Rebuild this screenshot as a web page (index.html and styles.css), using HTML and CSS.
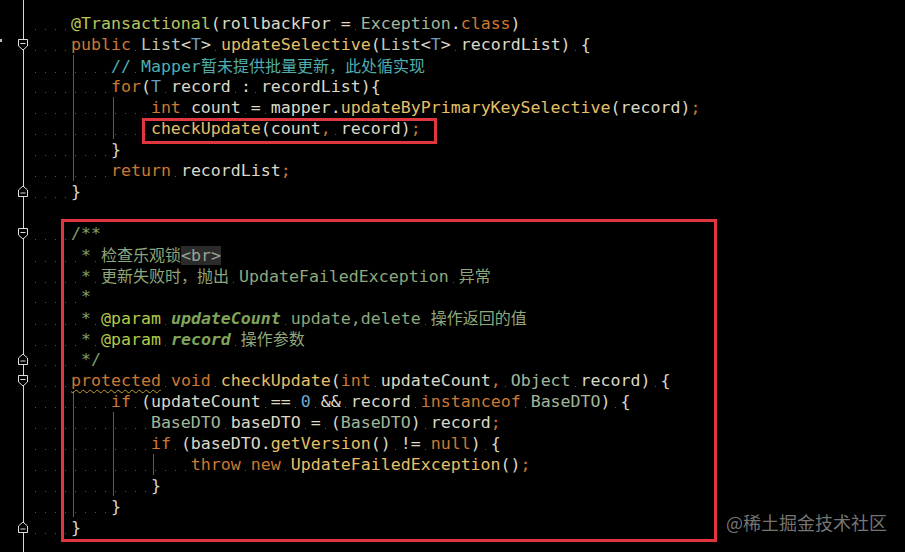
FILE: index.html
```html
<!DOCTYPE html>
<html lang="zh">
<head>
<meta charset="utf-8">
<title>checkUpdate</title>
<link rel="stylesheet" href="styles.css">
</head>
<body>
<div class="editor">
  <span class="tick"></span>
  <div class="code">
    <div class="ln"><span class="gut"></span><span class="src"><span class="w">    </span><span class="an">@Transactional</span>(rollbackFor<span class="w"> </span>=<span class="w"> </span><span class="cl">Exception</span>.<span class="k">class</span>)</span></div>
    <div class="ln"><span class="gut"><svg class="fold" viewBox="0 0 12 13"><path d="M1.5 1.5H10.5V8L6 12L1.5 8Z"/><path d="M3.5 5.5H8.5"/></svg></span><span class="src"><span class="w">    </span><span class="k">public</span><span class="w"> </span><span class="li">List</span>&lt;<span class="tp">T</span>&gt;<span class="w"> </span><span class="fn">updateSelective</span>(<span class="li">List</span>&lt;<span class="tp">T</span>&gt;<span class="w"> </span>recordList)<span class="w"> </span>{</span></div>
    <div class="ln g1"><span class="gut"></span><span class="src"><span class="w">        </span><span class="cm">//<span class="w"> </span>Mapper<span class="zh">暂未提供批量更新，此处循实现</span></span></span></div>
    <div class="ln g1"><span class="gut"></span><span class="src"><span class="w">        </span><span class="k">for</span>(<span class="tp">T</span><span class="w"> </span>record<span class="w"> </span>:<span class="w"> </span>recordList){</span></div>
    <div class="ln g2"><span class="gut"></span><span class="src"><span class="w">            </span><span class="k">int</span><span class="w"> </span>count<span class="w"> </span>=<span class="w"> </span>mapper.<span class="fn">updateByPrimaryKeySelective</span>(record)<span class="k">;</span></span></div>
    <div class="ln g2"><span class="gut"></span><span class="src"><span class="w">            </span><span class="fn">checkUpdate</span>(count<span class="k">,</span><span class="w"> </span>record)<span class="k">;</span></span></div>
    <div class="ln g1"><span class="gut"></span><span class="src"><span class="w">        </span>}</span></div>
    <div class="ln g1"><span class="gut"></span><span class="src"><span class="w">        </span><span class="k">return</span><span class="w"> </span>recordList<span class="k">;</span></span></div>
    <div class="ln"><span class="gut"><svg class="fold" viewBox="0 0 12 13"><path d="M1.5 11.5H10.5V5L6 1L1.5 5Z"/><path d="M3.5 8H8.5"/></svg></span><span class="src"><span class="w">    </span>}</span></div>
    <div class="ln"><span class="gut"></span><span class="src"> </span></div>
    <div class="ln"><span class="gut"><svg class="fold" viewBox="0 0 12 13"><path d="M1.5 1.5H10.5V8L6 12L1.5 8Z"/><path d="M3.5 5.5H8.5"/></svg></span><span class="src"><span class="w">    </span><span class="dc">/**</span></span></div>
    <div class="ln"><span class="gut"></span><span class="src"><span class="w">     </span><span class="dc">*</span><span class="w"> </span><span class="dt"><span class="zh">检查乐观锁</span></span><span class="br">&lt;br&gt;</span></span></div>
    <div class="ln"><span class="gut"></span><span class="src"><span class="w">     </span><span class="dc">*</span><span class="w"> </span><span class="dt"><span class="zh">更新失败时，抛出</span><span class="w"> </span>UpdateFailedException<span class="w"> </span><span class="zh">异常</span></span></span></div>
    <div class="ln"><span class="gut"></span><span class="src"><span class="w">     </span><span class="dc">*</span></span></div>
    <div class="ln"><span class="gut"></span><span class="src"><span class="w">     </span><span class="dc">*</span><span class="w"> </span><span class="tag">@param</span><span class="w"> </span><span class="pn">updateCount</span><span class="w"> </span><span class="dt">update,delete<span class="w"> </span><span class="zh">操作返回的值</span></span></span></div>
    <div class="ln"><span class="gut"></span><span class="src"><span class="w">     </span><span class="dc">*</span><span class="w"> </span><span class="tag">@param</span><span class="w"> </span><span class="pn">record</span><span class="w"> </span><span class="dt"><span class="zh">操作参数</span></span></span></div>
    <div class="ln"><span class="gut"><svg class="fold" viewBox="0 0 12 13"><path d="M1.5 11.5H10.5V5L6 1L1.5 5Z"/><path d="M3.5 8H8.5"/></svg></span><span class="src"><span class="w">     </span><span class="dc">*/</span></span></div>
    <div class="ln"><span class="gut"><svg class="fold" viewBox="0 0 12 13"><path d="M1.5 1.5H10.5V8L6 12L1.5 8Z"/><path d="M3.5 5.5H8.5"/></svg></span><span class="src"><span class="w">    </span><span class="k warn">protected</span><span class="w"> </span><span class="k">void</span><span class="w"> </span><span class="fn">checkUpdate</span>(<span class="k">int</span><span class="w"> </span>updateCount<span class="k">,</span><span class="w"> </span><span class="cl">Object</span><span class="w"> </span>record)<span class="w"> </span>{</span></div>
    <div class="ln g1"><span class="gut"></span><span class="src"><span class="w">        </span><span class="k">if</span><span class="w"> </span>(updateCount<span class="w"> </span>==<span class="w"> </span><span class="num">0</span><span class="w"> </span>&amp;&amp;<span class="w"> </span>record<span class="w"> </span><span class="k">instanceof</span><span class="w"> </span><span class="cl">BaseDTO</span>)<span class="w"> </span>{</span></div>
    <div class="ln g2"><span class="gut"></span><span class="src"><span class="w">            </span><span class="cl">BaseDTO</span><span class="w"> </span>baseDTO<span class="w"> </span>=<span class="w"> </span>(<span class="cl">BaseDTO</span>)<span class="w"> </span>record<span class="k">;</span></span></div>
    <div class="ln g2"><span class="gut"></span><span class="src"><span class="w">            </span><span class="k">if</span><span class="w"> </span>(baseDTO.<span class="fn">getVersion</span>()<span class="w"> </span>!=<span class="w"> </span><span class="k">null</span>)<span class="w"> </span>{</span></div>
    <div class="ln g3"><span class="gut"></span><span class="src"><span class="w">                </span><span class="k">throw</span><span class="w"> </span><span class="k">new</span><span class="w"> </span><span class="fn">UpdateFailedException</span>()<span class="k">;</span></span></div>
    <div class="ln g2"><span class="gut"></span><span class="src"><span class="w">            </span>}</span></div>
    <div class="ln g1"><span class="gut"></span><span class="src"><span class="w">        </span>}</span></div>
    <div class="ln"><span class="gut"><svg class="fold" viewBox="0 0 12 13"><path d="M1.5 11.5H10.5V5L6 1L1.5 5Z"/><path d="M3.5 8H8.5"/></svg></span><span class="src"><span class="w">    </span>}</span></div>
  </div>
  <div class="mark mark-call"></div>
  <div class="mark mark-method"></div>
  <div class="watermark">@稀土掘金技术社区</div>
</div>
</body>
</html>
```
FILE: styles.css
```css
html, body {
  margin: 0;
  padding: 0;
  background: #000;
}

.editor {
  position: relative;
  width: 905px;
  height: 552px;
  overflow: hidden;
  background: #000 linear-gradient(#d8d8d8, #d8d8d8) no-repeat 23px 0 / 1px 100%;
}

.tick {
  position: absolute;
  left: 0;
  top: 39px;
  width: 2px;
  height: 3px;
  background: #bbb;
}

.code {
  padding-top: 13px;
  font-family: "DejaVu Sans Mono", "Noto Sans CJK SC", monospace;
  font-size: 16.6px;
  line-height: 21px;
  color: #dcd8c6;
}

.ln {
  display: flex;
  height: 21px;
  white-space: pre;
}

.ln.g1 {
  background: linear-gradient(#5a5a5a, #5a5a5a) no-repeat 73px 0 / 1px 100%;
}
.ln.g2 {
  background:
    linear-gradient(#5a5a5a, #5a5a5a) no-repeat 73px 0 / 1px 100%,
    linear-gradient(#5a5a5a, #5a5a5a) no-repeat 113px 0 / 1px 100%;
}
.ln.g3 {
  background:
    linear-gradient(#5a5a5a, #5a5a5a) no-repeat 73px 0 / 1px 100%,
    linear-gradient(#5a5a5a, #5a5a5a) no-repeat 113px 0 / 1px 100%,
    linear-gradient(#5a5a5a, #5a5a5a) no-repeat 153px 0 / 1px 100%;
}

.gut {
  flex: 0 0 31px;
  display: flex;
  align-items: center;
  padding-left: 17px;
  box-sizing: border-box;
}

.fold {
  width: 12px;
  height: 13px;
  fill: #000;
  stroke: #e0e0e0;
  stroke-width: 1;
}

.src {
  flex: 1;
}

.w {
  background-image: linear-gradient(90deg, transparent 4px, #555 4px, #555 5px, transparent 5px);
  background-size: 10px 1px;
  background-repeat: repeat-x;
  background-position: 0 15px;
}

.zh {
  font-family: "Noto Sans CJK SC", sans-serif;
  font-size: 16px;
}

.k { color: #cc7832; }
.an { color: #b9c45c; }
.cl { color: #a3b69a; }
.li { color: #bcc6b8; }
.tp { color: #6d9cc0; }
.fn { color: #e6bf68; }
.num { color: #6aaad2; }
.cm { color: #4fadad; }
.dc { color: #7d9f6a; }
.dt { color: #8ea77c; }
.tag { color: #b3c94a; }
.pn {
  color: #7fa45a;
  font-weight: bold;
  font-style: italic;
}
.br {
  color: #98a498;
  background: #2b2b2b;
}

.warn {
  text-decoration: underline wavy #c0a032;
  text-decoration-thickness: 1px;
  text-underline-offset: 3px;
}

.mark {
  position: absolute;
  border: 3px solid #e2363e;
  box-sizing: border-box;
}
.mark-call {
  left: 142px;
  top: 118px;
  width: 295px;
  height: 26px;
}
.mark-method {
  left: 61px;
  top: 219px;
  width: 656px;
  height: 323px;
}

.watermark {
  position: absolute;
  left: 726px;
  top: 510px;
  font-family: "Noto Sans CJK SC", sans-serif;
  font-size: 18px;
  line-height: 24px;
  color: rgba(170, 170, 170, 0.7);
  white-space: nowrap;
}
```
